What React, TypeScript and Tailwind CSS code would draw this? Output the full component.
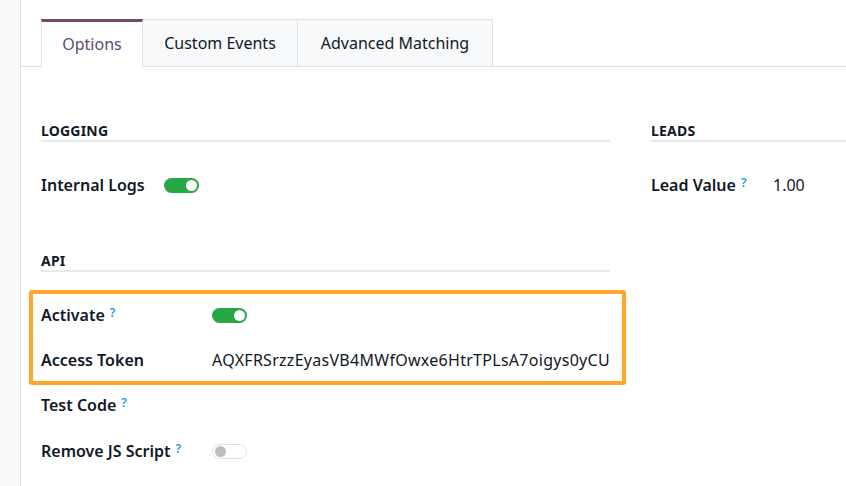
import React from "react";

const font = { fontFamily: '"Noto Sans", "Open Sans", Arial, sans-serif' };

function Help() {
  return (
    <sup className="relative -top-[4px] ml-[5px] text-[12px] font-semibold text-[#1d9ad6]">
      ?
    </sup>
  );
}

function Toggle({ on }: { on: boolean }) {
  return on ? (
    <span className="inline-flex h-[15px] w-[35px] items-center justify-end rounded-full bg-[#28a745] pr-[2px]">
      <span className="h-[11px] w-[11px] rounded-full bg-white" />
    </span>
  ) : (
    <span className="inline-flex h-[15px] w-[35px] items-center rounded-full border border-[#dee2e6] bg-white pl-[2px]">
      <span className="h-[11px] w-[11px] rounded-full bg-[#bdbdbd]" />
    </span>
  );
}

function Heading({ children }: { children: React.ReactNode }) {
  return (
    <div className="border-b-2 border-[#e7e9ed] pt-[1px] text-[14px] leading-[19px] font-bold uppercase tracking-[0.2px] text-[#111827]">
      {children}
    </div>
  );
}

export default function App() {
  const tabs = ["Options", "Custom Events", "Advanced Matching"];
  return (
    <div
      className="flex h-[486px] w-[846px] overflow-hidden bg-white text-[#1f2937]"
      style={font}
    >
      <div className="w-[21px] shrink-0 border-r border-[#dee2e6] bg-[#f8f9fa]" />
      <div className="min-w-0 flex-1">
        {/* tabs */}
        <div className="flex border-b border-[#dee2e6] pl-[20px] pt-[19px]">
          {tabs.map((t, i) => (
            <div
              key={t}
              className={
                i === 0
                  ? "-mb-px flex h-[48px] w-[102px] items-center justify-center border-x border-t-[3px] border-[#dee2e6] border-t-[#714b67] bg-white pb-[1px] text-[16px] text-[#5c4a78]"
                  : i === 1
                  ? "flex h-[47px] w-[155px] items-center justify-center border-r border-t border-[#dee2e6] bg-[#f8f9fa] pb-[1px] text-[16px] text-[#111827]"
                  : "flex h-[47px] w-[195px] items-center justify-center border-r border-t border-[#dee2e6] bg-[#f8f9fa] pb-[1px] text-[16px] text-[#111827]"
              }
            >
              {t}
            </div>
          ))}
        </div>

        <div className="flex pl-[20px] pt-[53px]">
          {/* left column */}
          <div className="w-[569px] shrink-0">
            <Heading>Logging</Heading>
            <div className="mt-[28px] flex h-[30px] items-center text-[16px]">
              <span className="font-semibold text-[#111827]">Internal Logs</span>
              <span className="ml-[19px] flex items-center">
                <Toggle on />
              </span>
            </div>

            <div className="mt-[50px]">
              <Heading>API</Heading>
            </div>

            <div className="-ml-[12px] mt-[18px] w-[597px] rounded-[3px] border-[4px] border-[#ffa62b] pb-[4px] pl-[8px] pt-[4px]">
              <div className="flex h-[34px] items-center text-[16px]">
                <span className="w-[171px] font-semibold text-[#111827]">
                  Activate
                  <Help />
                </span>
                <Toggle on />
              </div>
              <div className="mt-[11px] flex h-[34px] items-center text-[16px]">
                <span className="w-[171px] shrink-0 font-semibold text-[#111827]">
                  Access Token
                </span>
                <span className="whitespace-nowrap tracking-[0.28px] text-[#111827]">
                  AQXFRSrzzEyasVB4MWfOwxe6HtrTPLsA7oigys0yCU
                </span>
              </div>
            </div>

            <div className="mt-[3px] flex h-[34px] items-center text-[16px]">
              <span className="w-[171px] font-semibold text-[#111827]">
                Test Code
                <Help />
              </span>
            </div>
            <div className="mt-[12px] flex h-[34px] items-center text-[16px]">
              <span className="w-[171px] font-semibold text-[#111827]">
                Remove JS Script
                <Help />
              </span>
              <Toggle on={false} />
            </div>
          </div>

          {/* right column */}
          <div className="ml-[41px] flex-1">
            <Heading>Leads</Heading>
            <div className="mt-[28px] flex h-[30px] items-center text-[16px]">
              <span className="w-[122px] font-semibold text-[#111827]">
                Lead Value
                <Help />
              </span>
              <span className="text-[#111827]">1.00</span>
            </div>
          </div>
        </div>
      </div>
    </div>
  );
}
